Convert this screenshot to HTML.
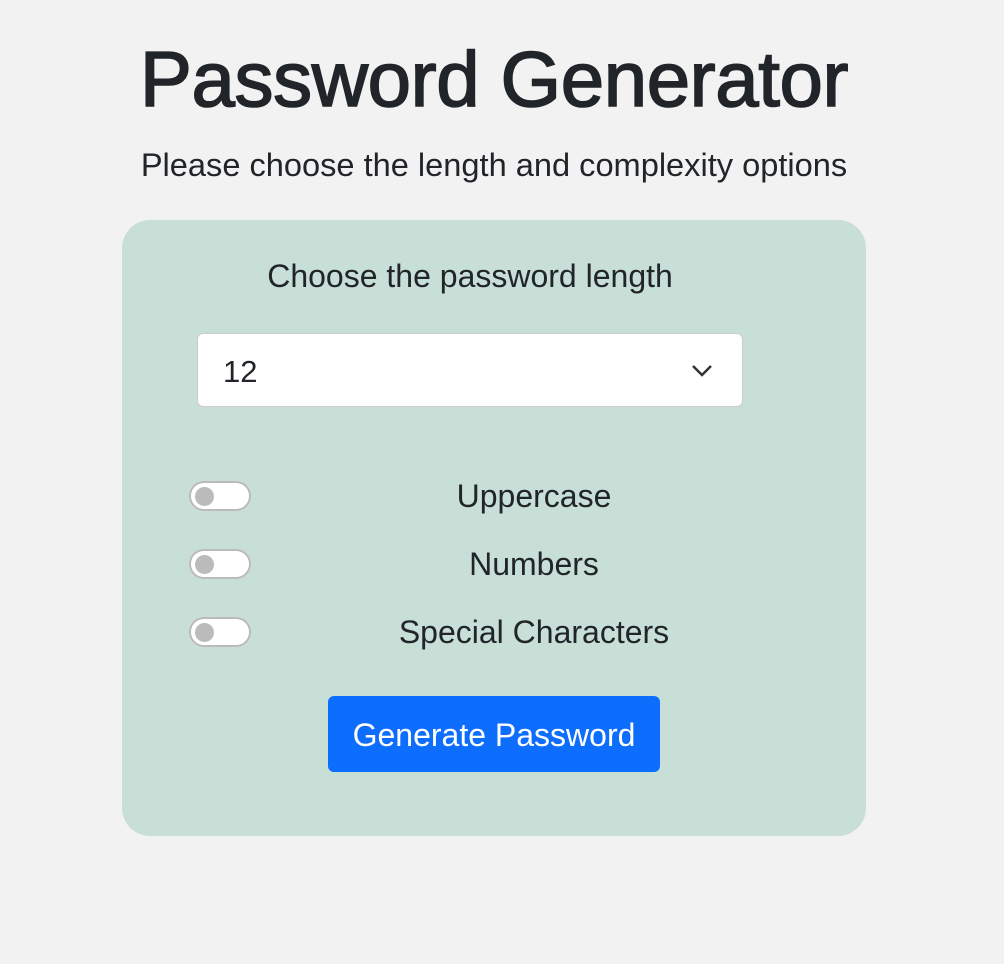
<!DOCTYPE html>
<html><head><style>
body{margin:0;background:#f2f2f2;font-family:"Liberation Sans",sans-serif;color:#212529;width:1004px;height:964px;position:relative;overflow:hidden}
.t{position:absolute;left:0;width:988px;text-align:center}
h1{position:absolute;top:40px;left:0;width:988px;margin:0;text-align:center;font-size:78px;font-weight:normal;letter-spacing:-0.4px;-webkit-text-stroke:1.6px #212529;line-height:1}
.card{position:absolute;left:122px;top:220px;width:744px;height:616px;background:#c8dfd7;border-radius:28px}
.sel{position:absolute;left:197px;top:333px;width:546px;height:74px;background:#fff;border:1px solid #ccc;border-radius:6px;box-sizing:border-box}
.sw{position:absolute;left:189px;width:62px;height:30px;border:2px solid #bbb;border-radius:16px;background:#fff;box-sizing:border-box}
.sw:after{content:"";position:absolute;left:4px;top:4px;width:19px;height:19px;border-radius:50%;background:#bbb}
.lab{position:absolute;left:256px;width:556px;text-align:center;font-size:32px}
.btn{position:absolute;left:328px;top:696px;width:332px;height:76px;background:#0d6efd;border-radius:6px;color:#fff;font-size:32px;text-align:center;line-height:78px}
</style></head><body>
<h1>Password Generator</h1>
<div class="t" style="top:146px;font-size:32.6px">Please choose the length and complexity options</div>
<div class="card"></div>
<div class="t" style="top:258px;left:122px;width:696px;font-size:32px">Choose the password length</div>
<div class="sel"><span style="position:absolute;left:25px;top:20px;font-size:31px">12</span>
<svg style="position:absolute;left:493px;top:30px" width="22" height="14" viewBox="0 0 22 14"><path d="M2 2l9 9 9-9" fill="none" stroke="#333" stroke-width="2.5"/></svg></div>
<div class="sw" style="top:481px"></div><div class="lab" style="top:478px">Uppercase</div>
<div class="sw" style="top:549px"></div><div class="lab" style="top:546px">Numbers</div>
<div class="sw" style="top:617px"></div><div class="lab" style="top:614px">Special Characters</div>
<div class="btn">Generate Password</div>
</body></html>
